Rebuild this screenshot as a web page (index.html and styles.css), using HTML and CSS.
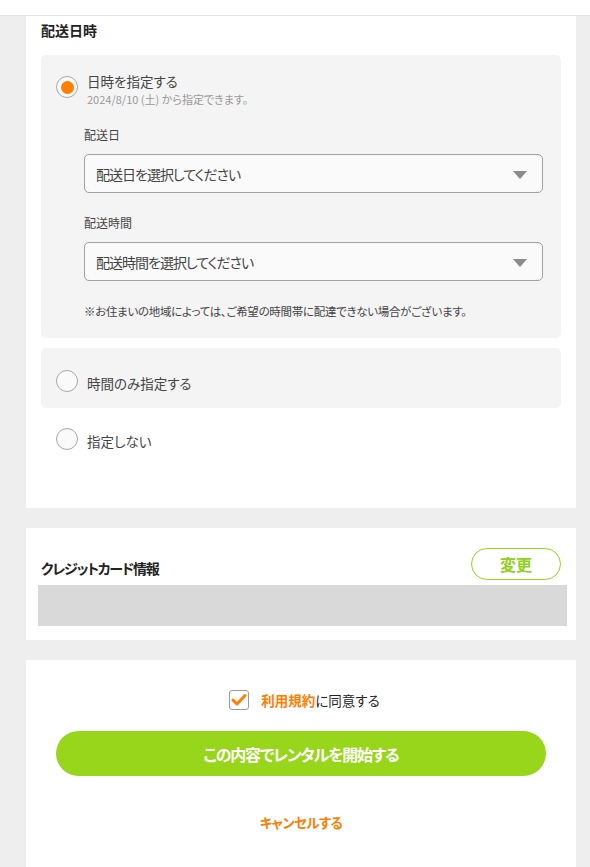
FILE: index.html
```html
<!DOCTYPE html>
<html lang="ja">
<head>
<meta charset="utf-8">
<link rel="stylesheet" href="styles.css">
</head>
<body>
<div class="topbar"></div>
<main class="wrap">
  <section class="card card-delivery">
    <h2 class="card-title">配送日時</h2>

    <div class="option panel panel-open">
      <div class="radio-row">
        <span class="radio checked"><span class="dot"></span></span>
        <div class="radio-text">
          <div class="radio-label">日時を指定する</div>
          <div class="radio-sub">2024/8/10 (土) から指定できます。</div>
        </div>
      </div>
      <div class="fields">
        <div class="field-label">配送日</div>
        <div class="select"><span>配送日を選択してください</span><span class="caret"></span></div>
        <div class="field-label">配送時間</div>
        <div class="select"><span>配送時間を選択してください</span><span class="caret"></span></div>
        <p class="note">※お住まいの地域によっては、ご希望の時間帯に配達できない場合がございます。</p>
      </div>
    </div>

    <div class="option panel panel-closed">
      <div class="radio-row center">
        <span class="radio"></span>
        <div class="radio-label shift">時間のみ指定する</div>
      </div>
    </div>

    <div class="option plain">
      <div class="radio-row center">
        <span class="radio"></span>
        <div class="radio-label shift">指定しない</div>
      </div>
    </div>
  </section>

  <section class="card card-credit">
    <div class="credit-head">
      <h2 class="card-title tight">クレジットカード情報</h2>
      <button class="btn-change">変更</button>
    </div>
    <div class="credit-box"></div>
  </section>

  <section class="card card-submit">
    <div class="agree">
      <span class="checkbox">
        <svg width="16" height="14" viewBox="0 0 16 14"><path d="M2 7.2 L6 11 L14 2.5" fill="none" stroke="#ff7e00" stroke-width="3" stroke-linecap="round" stroke-linejoin="round"/></svg>
      </span>
      <span class="agree-text"><span class="link">利用規約</span>に同意する</span>
    </div>
    <button class="btn-submit">この内容でレンタルを開始する</button>
    <div class="cancel">キャンセルする</div>
  </section>
</main>
</body>
</html>
```

FILE: styles.css
```css
* { box-sizing: border-box; }
html, body { margin: 0; padding: 0; }
body {
  background: #eeeeee;
  font-family: "Noto Sans CJK JP", "Noto Sans", sans-serif;
  font-feature-settings: "palt";
  color: #333333;
  font-size: 14px;
}
.topbar {
  height: 16px;
  background: #ffffff;
  border-bottom: 1px solid #e4e4e4;
}
.wrap {
  margin-left: 26px;
  width: 550px;
}
.card {
  background: #ffffff;
}
.card + .card { margin-top: 20px; }
.card-title {
  margin: 0;
  font-size: 14px;
  line-height: 20px;
  font-weight: 700;
  color: #222222;
}
.card-title.tight { letter-spacing: -1.2px; }
.card-delivery {
  padding: 4px 15px 38px;
}
.card-delivery .card-title { margin-bottom: 15px; }
.option { padding: 0 15px; }
.panel {
  background: #f4f4f4;
  border-radius: 5px;
}
.panel-open { padding: 17px 15px 18px; }
.panel-closed { margin-top: 10px; padding: 22px 15px 16px; }
.plain { padding: 20px 15px; }
.radio-row {
  display: flex;
  align-items: flex-start;
  gap: 9px;
}
.radio-row.center { align-items: center; }
.radio {
  flex: none;
  width: 22px;
  height: 22px;
  border-radius: 50%;
  border: 1px solid #a8a8a8;
  background: #fafafa;
  display: flex;
  align-items: center;
  justify-content: center;
}
.radio.checked { margin-top: 4px; }
.dot {
  width: 13px;
  height: 13px;
  border-radius: 50%;
  background: #ff8000;
}
.radio-label {
  font-size: 13.5px;
  line-height: 18px;
  color: #444444;
}
.radio-label.shift { padding-top: 3px; }
.radio-sub {
  font-size: 11px;
  line-height: 16px;
  color: #999999;
  margin-top: 1px;
}
.fields {
  margin: 19px 3px 0 28px;
}
.field-label {
  font-size: 12px;
  line-height: 18px;
  color: #444444;
  margin-bottom: 10px;
}
.select + .field-label { margin-top: 21px; }
.select {
  height: 39px;
  border: 1px solid #a0a0a0;
  border-radius: 5px;
  background: #fafafa;
  display: flex;
  align-items: center;
  padding: 0 15px 0 11px;
  font-size: 14px;
  letter-spacing: -1px;
  color: #444444;
}
.caret {
  margin-left: auto;
  width: 0;
  height: 0;
  border-left: 7px solid transparent;
  border-right: 7px solid transparent;
  border-top: 8px solid #8a8a8a;
  margin-top: 2px;
}
.note {
  margin: 21px 0 0;
  font-size: 11.5px;
  letter-spacing: -0.3px;
  line-height: 18px;
  color: #444444;
}
.card-credit {
  padding: 20px 9px 14px 12px;
}
.credit-head {
  display: flex;
  align-items: flex-end;
  justify-content: space-between;
  margin: 0 6px 0 3px;
}
.credit-head .card-title { padding-bottom: 2px; }
.btn-change {
  width: 90px;
  height: 32px;
  border: 1px solid #97d61b;
  border-radius: 16px;
  background: #ffffff;
  color: #8fd11b;
  font-family: inherit;
  font-feature-settings: "palt";
  font-size: 16px;
  font-weight: 700;
  line-height: 1;
  padding: 0;
}
.credit-box {
  margin-top: 5px;
  height: 41px;
  background: #d9d9d9;
}
.card-submit {
  padding: 30px 30px 60px;
}
.agree {
  display: flex;
  align-items: center;
  justify-content: center;
  gap: 12px;
  margin-left: 7px;
}
.checkbox {
  width: 20px;
  height: 20px;
  border: 1px solid #9a9a9a;
  border-radius: 3px;
  background: #ffffff;
  display: flex;
  align-items: center;
  justify-content: center;
}
.agree-text {
  font-size: 13.5px;
  line-height: 20px;
  color: #222222;
}
.link {
  color: #ff7e00;
  font-weight: 700;
}
.btn-submit {
  display: block;
  width: 100%;
  margin-top: 21px;
  height: 45px;
  border: none;
  border-radius: 23px;
  background: #97d61b;
  color: #ffffff;
  font-family: inherit;
  font-feature-settings: "palt";
  font-size: 16px;
  letter-spacing: -1.2px;
  font-weight: 700;
  padding: 0;
}
.cancel {
  margin-top: 36px;
  text-align: center;
  font-size: 13.5px;
  letter-spacing: -0.6px;
  line-height: 20px;
  font-weight: 700;
  color: #ff7e00;
}
```
